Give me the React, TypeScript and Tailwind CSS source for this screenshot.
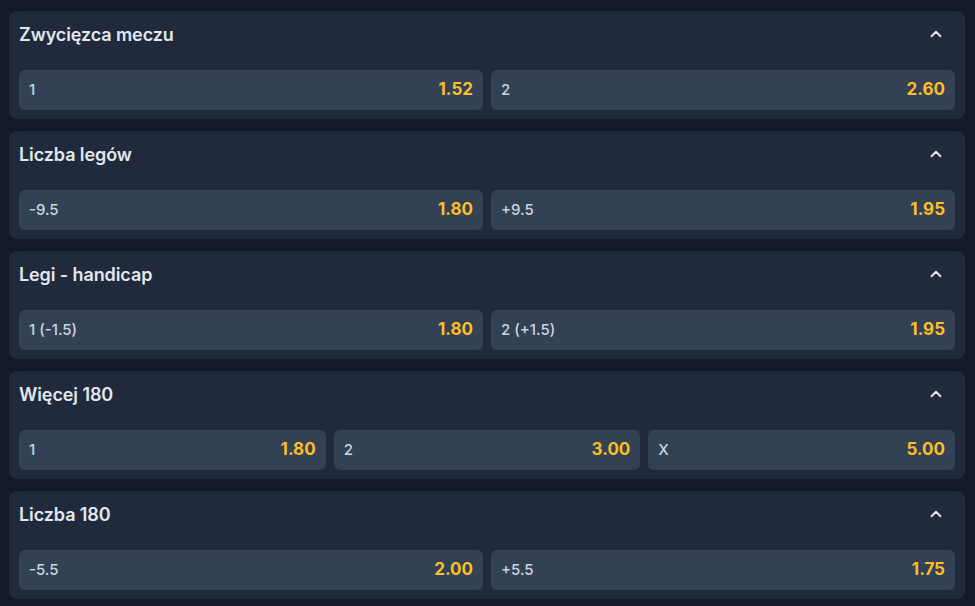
import React from 'react';
import { ChevronUp } from 'lucide-react';

type Outcome = { label: string; odds: string };
type Market = { title: string; outcomes: Outcome[] };

const markets: Market[] = [
  { title: 'Zwycięzca meczu', outcomes: [{ label: '1', odds: '1.52' }, { label: '2', odds: '2.60' }] },
  { title: 'Liczba legów', outcomes: [{ label: '-9.5', odds: '1.80' }, { label: '+9.5', odds: '1.95' }] },
  { title: 'Legi - handicap', outcomes: [{ label: '1 (-1.5)', odds: '1.80' }, { label: '2 (+1.5)', odds: '1.95' }] },
  {
    title: 'Więcej 180',
    outcomes: [
      { label: '1', odds: '1.80' },
      { label: '2', odds: '3.00' },
      { label: 'X', odds: '5.00' },
    ],
  },
  { title: 'Liczba 180', outcomes: [{ label: '-5.5', odds: '2.00' }, { label: '+5.5', odds: '1.75' }] },
];

function MarketCard({ market }: { market: Market }) {
  return (
    <div className="bg-[#202a3c] rounded-lg px-[10px] pb-[9px]">
      <div className="h-[46px] mb-[13px] flex items-center justify-between">
        <h3 className="text-[18px] font-semibold text-[#e2e8f0] tracking-[-0.1px]">{market.title}</h3>
        <ChevronUp className="w-[18px] h-[18px] text-[#e2e8f0] mr-[10px]" strokeWidth={2.5} />
      </div>
      <div className={market.outcomes.length === 3 ? 'grid grid-cols-3 gap-2' : 'grid grid-cols-2 gap-2'}>
        {market.outcomes.map((o, i) => (
          <button
            key={i}
            className="h-10 rounded-md bg-[#334155] flex items-center justify-between px-[10px] text-left"
          >
            <span className="text-[15px] text-[#cbd5e1] font-medium">{o.label}</span>
            <span className="text-[17px] font-bold text-[#fbbf24]">{o.odds}</span>
          </button>
        ))}
      </div>
    </div>
  );
}

export default function App() {
  return (
    <div
      className="min-h-screen bg-[#131b2a] pt-[11px] pl-[9px] pr-[10px] pb-2 flex flex-col gap-3"
      style={{ fontFamily: 'Inter, "Noto Sans", sans-serif' }}
    >
      {markets.map((m) => (
        <MarketCard key={m.title} market={m} />
      ))}
    </div>
  );
}
